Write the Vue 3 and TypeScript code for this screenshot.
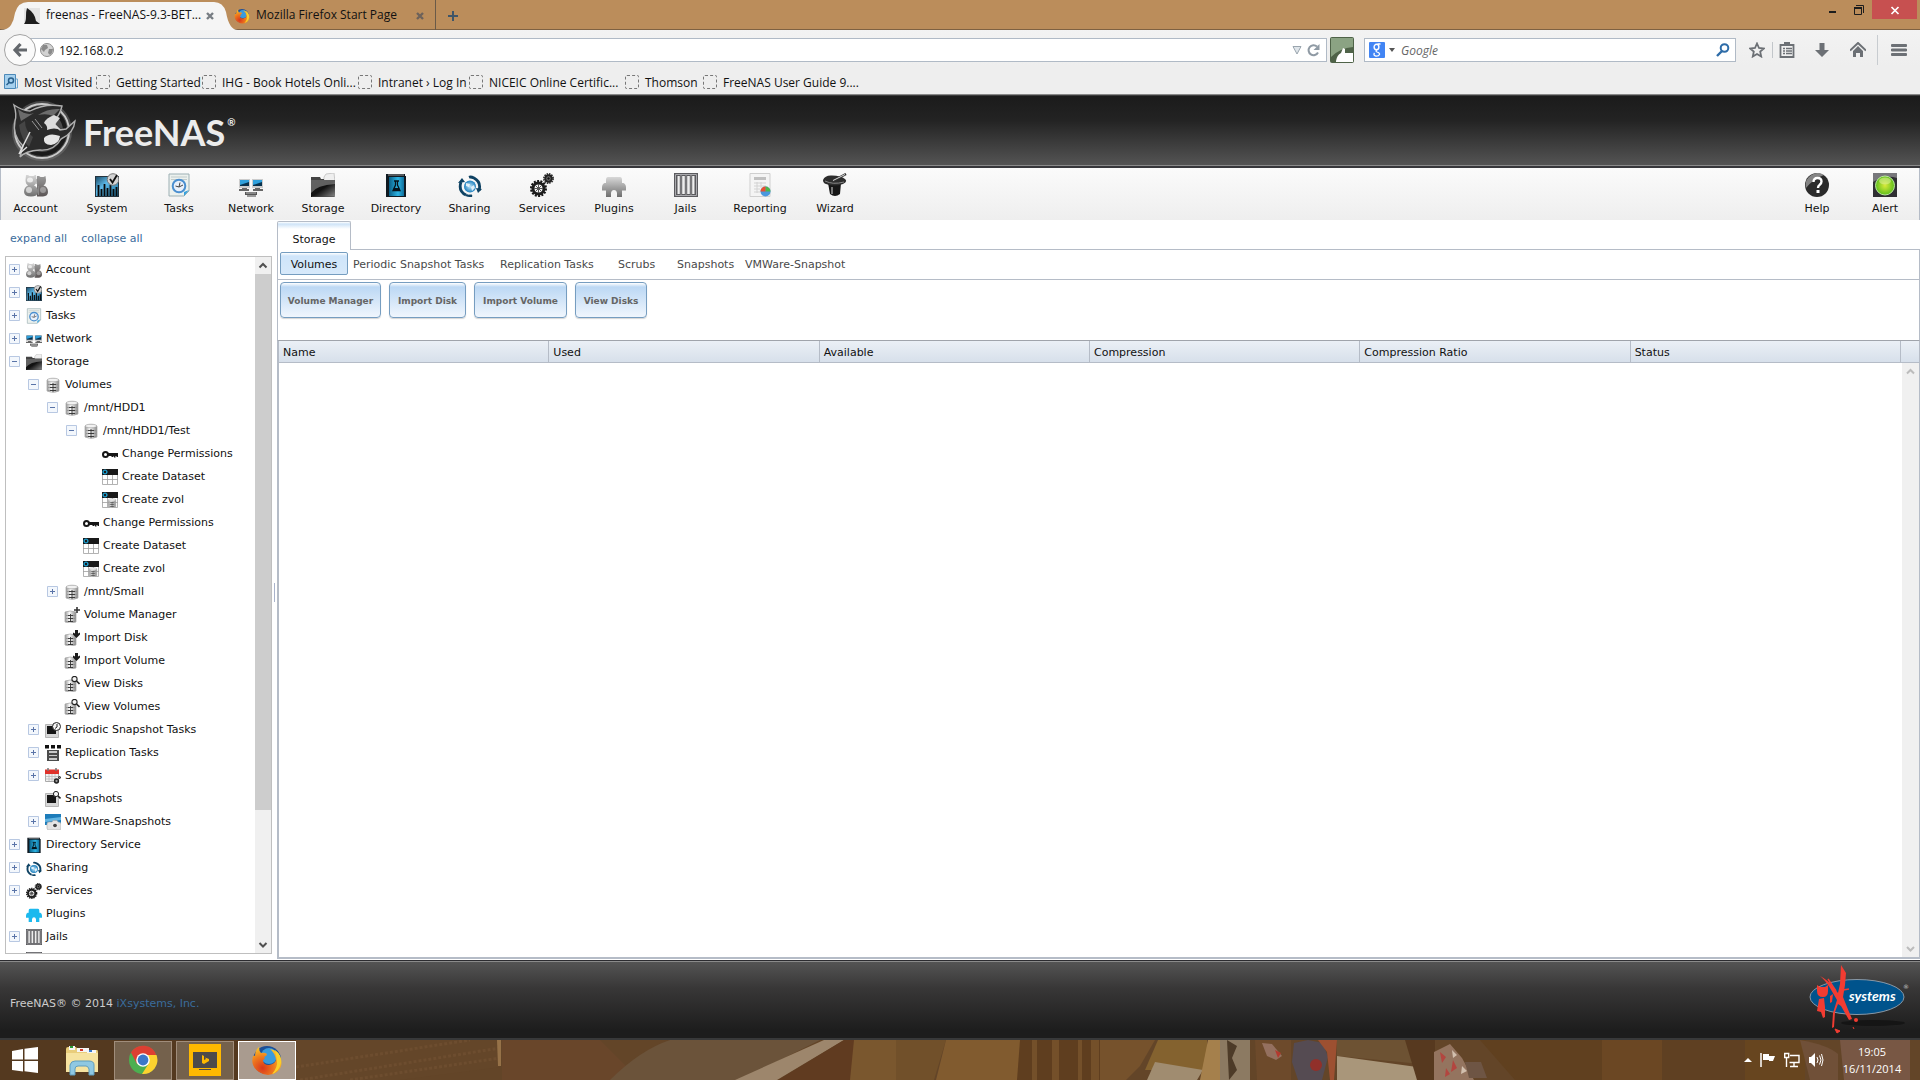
<script setup lang="ts">
interface MenuItem { label: string; icon: string }
interface TreeRow { label?: string; icon: string; level: number; state?: '+' | '-' }

const bookmarks: string[] = [
  'Most Visited', 'Getting Started', 'IHG - Book Hotels Onli...', 'Intranet › Log In',
  'NICEIC Online Certific...', 'Thomson', 'FreeNAS User Guide 9....',
]

const menu: MenuItem[] = [
  { label: 'Account', icon: 'account' },
  { label: 'System', icon: 'system' },
  { label: 'Tasks', icon: 'tasks' },
  { label: 'Network', icon: 'network' },
  { label: 'Storage', icon: 'storage' },
  { label: 'Directory', icon: 'directory' },
  { label: 'Sharing', icon: 'sharing' },
  { label: 'Services', icon: 'services' },
  { label: 'Plugins', icon: 'plugins' },
  { label: 'Jails', icon: 'jails' },
  { label: 'Reporting', icon: 'reporting' },
  { label: 'Wizard', icon: 'wizard' },
]

const statusMenu: MenuItem[] = [
  { label: 'Help', icon: 'help' },
  { label: 'Alert', icon: 'alert' },
]

const tree: TreeRow[] = [
  { label: 'Account', icon: 'account', level: 0, state: '+' },
  { label: 'System', icon: 'system', level: 0, state: '+' },
  { label: 'Tasks', icon: 'tasks', level: 0, state: '+' },
  { label: 'Network', icon: 'network', level: 0, state: '+' },
  { label: 'Storage', icon: 'storage', level: 0, state: '-' },
  { label: 'Volumes', icon: 'disk', level: 1, state: '-' },
  { label: '/mnt/HDD1', icon: 'disk', level: 2, state: '-' },
  { label: '/mnt/HDD1/Test', icon: 'disk', level: 3, state: '-' },
  { label: 'Change Permissions', icon: 'key', level: 4 },
  { label: 'Create Dataset', icon: 'dataset', level: 4 },
  { label: 'Create zvol', icon: 'zvol', level: 4 },
  { label: 'Change Permissions', icon: 'key', level: 3 },
  { label: 'Create Dataset', icon: 'dataset', level: 3 },
  { label: 'Create zvol', icon: 'zvol', level: 3 },
  { label: '/mnt/Small', icon: 'disk', level: 2, state: '+' },
  { label: 'Volume Manager', icon: 'disk-add', level: 2 },
  { label: 'Import Disk', icon: 'disk-import', level: 2 },
  { label: 'Import Volume', icon: 'disk-import', level: 2 },
  { label: 'View Disks', icon: 'disk-view', level: 2 },
  { label: 'View Volumes', icon: 'disk-view', level: 2 },
  { label: 'Periodic Snapshot Tasks', icon: 'snap-clock', level: 1, state: '+' },
  { label: 'Replication Tasks', icon: 'replication', level: 1, state: '+' },
  { label: 'Scrubs', icon: 'scrubs', level: 1, state: '+' },
  { label: 'Snapshots', icon: 'snap-view', level: 1 },
  { label: 'VMWare-Snapshots', icon: 'vmware', level: 1, state: '+' },
  { label: 'Directory Service', icon: 'directory', level: 0, state: '+' },
  { label: 'Sharing', icon: 'sharing', level: 0, state: '+' },
  { label: 'Services', icon: 'services', level: 0, state: '+' },
  { label: 'Plugins', icon: 'plugins-blue', level: 0 },
  { label: 'Jails', icon: 'jails', level: 0, state: '+' },
  { icon: 'jails', level: 0 },
]

const subTabs: string[] = [
  'Volumes', 'Periodic Snapshot Tasks', 'Replication Tasks', 'Scrubs', 'Snapshots', 'VMWare-Snapshot',
]
const actions: string[] = ['Volume Manager', 'Import Disk', 'Import Volume', 'View Disks']
const columns: string[] = ['Name', 'Used', 'Available', 'Compression', 'Compression Ratio', 'Status']
</script>

<template>
  <div class="screen">
    <svg class="sprite" aria-hidden="true">
      <defs>
        <linearGradient id="gGrey" x1="0" y1="0" x2="0" y2="1"><stop offset="0" stop-color="#d8d8d8" /><stop offset="1" stop-color="#6e6e6e" /></linearGradient>
        <linearGradient id="gDark" x1="0" y1="0" x2="0" y2="1"><stop offset="0" stop-color="#9a9a9a" /><stop offset="1" stop-color="#5b5555" /></linearGradient>
        <linearGradient id="gBlue" x1="0" y1="0" x2="1" y2="1"><stop offset="0" stop-color="#1d4d69" /><stop offset=".4" stop-color="#5db9e8" /><stop offset="1" stop-color="#1b6c97" /></linearGradient>
        <linearGradient id="gBook" x1="0" y1="0" x2="1" y2="0"><stop offset="0" stop-color="#0a5f86" /><stop offset=".6" stop-color="#2cb4e4" /><stop offset="1" stop-color="#0f6f9c" /></linearGradient>
        <linearGradient id="gFolder" x1="0" y1="0" x2="1" y2="1"><stop offset="0" stop-color="#1a1a1a" /><stop offset=".5" stop-color="#111" /><stop offset="1" stop-color="#8a8a8a" /></linearGradient>
        <linearGradient id="gDisk" x1="0" y1="0" x2="1" y2="0"><stop offset="0" stop-color="#999" /><stop offset=".4" stop-color="#fafafa" /><stop offset="1" stop-color="#8a8a8a" /></linearGradient>
        <radialGradient id="gGlobe"><stop offset="0" stop-color="#bfe6fa" /><stop offset="1" stop-color="#1c7fbd" /></radialGradient>
        <radialGradient id="gLamp"><stop offset="0" stop-color="#d8ea3a" /><stop offset="1" stop-color="#5fbf1c" /></radialGradient>
        <radialGradient id="gFox" cx=".35" cy=".75" r=".8"><stop offset="0" stop-color="#d9371c" /><stop offset=".5" stop-color="#ef7b1d" /><stop offset="1" stop-color="#fbd32a" /></radialGradient>
      </defs>

      <symbol id="i-account" viewBox="0 0 24 24">
        <path d="M13 3h2l1.500 1h3l2-1 .5 4q0 4-2.500 5.500Q24 13.500 24 19q0 4-5 4.500h-6z" fill="url(#gDark)" />
        <path d="M2 2h2l1.500 1h4L11 2h1l.5 5q0 4-2.500 5.500Q14 14 14 19q-.5 4.500-7 4.500T0 19q0-5 4-6.500Q1.500 11 1.500 7z" fill="url(#gGrey)" />
        <ellipse cx="5" cy="17" rx="3" ry="3" fill="#eee" opacity=".7" /><ellipse cx="6" cy="7" rx="3" ry="2.500" fill="#fff" opacity=".7" />
        <path d="M14.500 13v9M13 6v5" stroke="#888" fill="none" /><ellipse cx="19" cy="17" rx="3" ry="3" fill="#ccc" opacity=".5" />
      </symbol>
      <symbol id="i-system" viewBox="0 0 24 24">
        <path d="M0 3h24v21H0z" fill="#26343e" /><path d="M1 4h22v19H1z" fill="url(#gBlue)" />
        <path d="M3.500 23V12M6.500 23v-7M9.500 23V11M12.500 23v-8M15.500 23V12M18.500 23v-7M21.500 23v-9" stroke="#0a0a0a" stroke-width="1.800" />
        <circle cx="18" cy="6.500" r="5.800" fill="#d4d4d4" stroke="#777" /><path d="M15 6l2.500 3.500L22 2" fill="none" stroke="#111" stroke-width="1.800" />
      </symbol>
      <symbol id="i-tasks" viewBox="0 0 24 24">
        <path d="M2 1h20v17l-5 5H2z" fill="#ecf1ee" stroke="#9db0b4" /><path d="M4 4h16M4 6.500h16" stroke="#c1cbcb" />
        <circle cx="12" cy="13" r="6.300" fill="#e9f0fb" stroke="#4b8fd0" stroke-width="2" /><path d="M12 14l1-4.500M12 14l-3.500-1M12 14l4-2" stroke="#444" fill="none" />
        <path d="M22 17l-5 6v-4z" fill="#35a0dc" />
      </symbol>
      <symbol id="i-network" viewBox="0 0 24 24">
        <path d="M0 6h11v9H0zM13 6h11v9H13z" fill="#ccc" /><path d="M1 7h9v6H1zM14 7h9v6h-9z" fill="#08324e" /><path d="M1 7h9v2L1 12zM14 7h9v2l-9 3z" fill="#2fa0dc" />
        <path d="M3 15h5v2H3zM16 15h5v2h-5zM0 16h10v2H0zM14 16h10v2H14z" fill="#666" /><path d="M6 19h12v3H6z" fill="#555" /><path d="M8 22h9v2H8z" fill="#999" /><path d="M7 20h10" stroke="#bbb" />
      </symbol>
      <symbol id="i-storage" viewBox="0 0 24 24">
        <path d="M13 4l2-3 8-1 1 9H13z" fill="#efefef" stroke="#c9c9c9" /><path d="M0 4h9l1 2h3v3H0z" fill="#444" />
        <path d="M0 7h24v17H0z" fill="url(#gFolder)" /><path d="M0 20Q6 12 24 11V7H0z" fill="#8a8a8a" opacity=".65" /><path d="M1 24h22" stroke="#444" />
      </symbol>
      <symbol id="i-directory" viewBox="0 0 24 24">
        <path d="M2 1h19v2H22v21H2z" fill="#101a22" /><path d="M5 4h15v19H5z" fill="url(#gBook)" /><path d="M4 2h16" stroke="#999" />
        <path d="M10 8h5M11.500 8v4L9 17.500h7L13.500 12V8" fill="none" stroke="#06141c" stroke-width="1.300" /><path d="M10 15h5l1 3H9z" fill="#06141c" />
      </symbol>
      <symbol id="i-sharing" viewBox="0 0 24 24">
        <circle cx="12" cy="13.500" r="6" fill="url(#gGlobe)" /><path d="M8 10l4 1-1 3-3-1zM13 14l3-2 1 3-3 3z" fill="#fff" opacity=".8" />
        <path d="M3 9Q0 18 8 22M11 23l3 .5M21 17.500Q23.500 9 16 5M11 4.200Q13 3.500 16 5" fill="none" stroke="#0e4263" stroke-width="2.800" />
        <path d="M0 10l4-5 3 4zM24 16l-4 4-2-5z" fill="#0e4263" /><path d="M8 22q3 1.500 6 .5" fill="none" stroke="#0e4263" stroke-width="2" />
      </symbol>
      <symbol id="i-services" viewBox="0 0 24 24">
        <circle cx="8.500" cy="15.500" r="7.400" fill="none" stroke="#161616" stroke-width="2.200" stroke-dasharray="2 1.320" /><circle cx="8.500" cy="15.500" r="5.500" fill="none" stroke="#1c1c1c" stroke-width="3" />
        <circle cx="8.500" cy="15.500" r="1.800" fill="#333" /><path d="M8.500 11v9M4 15.500h9M5.500 12.500l6 6M11.500 12.500l-6 6" stroke="#555" />
        <circle cx="18.500" cy="5.500" r="4.600" fill="none" stroke="#333" stroke-width="1.800" stroke-dasharray="1.500 .9" /><circle cx="18.500" cy="5.500" r="3.200" fill="#777" stroke="#222" stroke-width="2" /><circle cx="18.500" cy="5.500" r="1.200" fill="#111" />
      </symbol>
      <symbol id="i-plugins" viewBox="0 0 24 24">
        <path d="M6 4h12q2 0 2 3v3h1.500q2.500 1 2.500 4.500v3h-4v6.500h-5v-4q-.5-3-3-3t-3 3v4H4v-6.500H0v-3Q0 11 2.500 10H4V7q0-3 2-3z" fill="url(#gGrey)" />
      </symbol>
      <symbol id="i-plugins-blue" viewBox="0 0 24 24">
        <path d="M6 4h12q2 0 2 3v3h1.500q2.500 1 2.500 4.500v3h-4v6.500h-5v-4q-.5-3-3-3t-3 3v4H4v-6.500H0v-3Q0 11 2.500 10H4V7q0-3 2-3z" fill="#1cb9ee" />
      </symbol>
      <symbol id="i-jails" viewBox="0 0 24 24">
        <path d="M0 0h24v24H0z" fill="#5a5a5e" /><path d="M3.500 3h17v18h-17z" fill="#eee" /><path d="M1.500 1.500h21v21h-21z" fill="none" stroke="#a9a9ad" />
        <path d="M7 2v20M12 2v20M17 2v20" stroke="#55555a" stroke-width="2.400" /><path d="M7 2v20M12 2v20M17 2v20" stroke="#aaa" stroke-width=".8" />
      </symbol>
      <symbol id="i-reporting" viewBox="0 0 24 24">
        <path d="M2 .5h20v23H2z" fill="#f4f4f4" stroke="#cfcfcf" /><path d="M6 4h12v3H6z" fill="#c0c0c0" />
        <path d="M6 10h12M6 13h12M6 16h6M6 19h6M9 9v11M13 9v6" stroke="#d2d2d2" /><circle cx="17.500" cy="18.500" r="5" fill="#4a97dd" />
        <path d="M17.500 18.500V13.500A5 5 0 0 1 22.500 18.500z" fill="#4cb64a" /><path d="M17.500 18.500V13.500A5 5 0 0 0 12.500 18.500z" fill="#e8502f" />
      </symbol>
      <symbol id="i-wizard" viewBox="0 0 24 24">
        <path d="M5 10h13l-1 11q-5 4-10 0z" fill="#161616" /><path d="M0 7Q2 2 9 2.500q9 0 13 3.500 3 3-2 5-9 3-17 0Q0 10 0 7z" fill="#2d2d2d" />
        <path d="M2 8q8 4 19 1" fill="none" stroke="#888" /><path d="M9 8.500L23 1" stroke="#333" stroke-width="2.400" /><path d="M10 7.500L22 1.500" stroke="#ddd" /><path d="M9 14v7" stroke="#777" stroke-width="2" />
      </symbol>
      <symbol id="i-help" viewBox="0 0 24 24">
        <circle cx="12" cy="12" r="12" fill="#2b2b2b" /><path d="M1 15A12 12 0 0 1 19 2Q8 6 1 15z" fill="#9b9b9b" opacity=".8" />
        <path d="M8.500 9q0-4 4-4t4 3.500q0 2-2 3.500-1.500 1-1.500 3" fill="none" stroke="#fff" stroke-width="2.400" /><path d="M11.500 17h3v3h-3z" fill="#fff" />
      </symbol>
      <symbol id="i-alert" viewBox="0 0 24 24">
        <path d="M0 0h24v24H0z" fill="#2f2f33" /><path d="M0 0h24v5Q12 1 0 9z" fill="#77777b" />
        <circle cx="12" cy="12.500" r="9.500" fill="url(#gLamp)" stroke="#bde8a0" /><ellipse cx="12" cy="8" rx="6" ry="3.500" fill="#e9f6a8" opacity=".5" />
      </symbol>

      <symbol id="i-disk" viewBox="0 0 16 16">
        <path d="M2 3q6-3 12 0v11q-6 3-12 0z" fill="url(#gDisk)" stroke="#a5a5a5" stroke-width=".7" /><ellipse cx="8" cy="3" rx="5.800" ry="1.800" fill="#f2f2f2" stroke="#999" stroke-width=".6" />
        <path d="M3 7.500h10M3 10.500h10M3 13.500h10" stroke="#888" stroke-width=".7" /><path d="M5 7.500h6M5 10.500h6M5 13.500h6M8 6v9" stroke="#333" stroke-width=".9" />
      </symbol>
      <symbol id="i-disk-small" viewBox="0 0 16 16">
        <path d="M1 5q5-2 11 0v10q-6 2-11 0z" fill="url(#gDisk)" stroke="#a5a5a5" stroke-width=".7" /><path d="M2 8.500h9M2 11.500h9M2 14.500h9" stroke="#888" stroke-width=".7" /><path d="M4 8.500h5M4 11.500h5M4 14.500h5M6.500 7v8" stroke="#333" stroke-width=".9" />
      </symbol>
      <symbol id="i-disk-add" viewBox="0 0 16 16"><use href="#i-disk-small" width="16" height="16" /><path d="M13 0v6M10 3h6" stroke="#333" stroke-width="1.600" /></symbol>
      <symbol id="i-disk-import" viewBox="0 0 16 16"><use href="#i-disk-small" width="16" height="16" /><path d="M11 0h3v3.500l2-1v2L12.500 8 9 4.500v-2l2 1z" fill="#1c1c1c" /></symbol>
      <symbol id="i-disk-view" viewBox="0 0 16 16"><use href="#i-disk-small" width="16" height="16" /><circle cx="10.500" cy="3" r="2.600" fill="#f5f5f5" stroke="#222" stroke-width="1.100" /><path d="M12.500 5l3 3" stroke="#222" stroke-width="1.600" /></symbol>
      <symbol id="i-key" viewBox="0 0 16 16"><circle cx="3.500" cy="8.500" r="2.500" fill="none" stroke="#161616" stroke-width="2" /><path d="M6 7h10v4h-1.500v-1h-1v1.500H12v-1h-1v.5H9.500V10H6z" fill="#161616" /></symbol>
      <symbol id="i-dataset" viewBox="0 0 16 16">
        <path d="M.5 5h15v10.500H.5zM5.500 5v10M10.500 5v10M0 10.500h16" fill="#fff" stroke="#a0a0a0" stroke-width=".8" /><path d="M0 0h16v6H0z" fill="#191919" />
        <circle cx="3" cy="3" r="1.900" fill="none" stroke="#1b9ccc" stroke-width="1.400" />
      </symbol>
      <symbol id="i-zvol" viewBox="0 0 16 16"><use href="#i-dataset" width="16" height="16" /><use href="#i-disk" x="5" y="6" width="10" height="10" /></symbol>
      <symbol id="i-snap" viewBox="0 0 16 16"><path d="M.5 2.500h13v13H.5z" fill="#d7d7d7" stroke="#b5b5b5" /><path d="M2 4h9v8H2z" fill="#161616" /></symbol>
      <symbol id="i-snap-clock" viewBox="0 0 16 16"><use href="#i-snap" width="16" height="16" /><circle cx="11.500" cy="4.500" r="4" fill="#f6f6f6" stroke="#222" /><path d="M12 2v3l-2 1.500" fill="none" stroke="#222" /></symbol>
      <symbol id="i-snap-view" viewBox="0 0 16 16"><use href="#i-snap" width="16" height="16" /><circle cx="11" cy="3" r="2.600" fill="#f6f6f6" stroke="#222" /><path d="M13 5l2.500 2.500" stroke="#222" stroke-width="1.600" /></symbol>
      <symbol id="i-replication" viewBox="0 0 16 16"><path d="M0 0h4v3.500H0zM6 0h4v3.500H6zM12 0h4v3.500h-4z" fill="#111" /><path d="M2 5h12v11H2z" fill="#4b4b4b" /><path d="M4 6h8v9H4z" fill="#c9c9c9" /><path d="M4 9h8M4 12h8" stroke="#222" stroke-width="1.300" /></symbol>
      <symbol id="i-scrubs" viewBox="0 0 16 16">
        <path d="M.5 4.500h13v9H.5z" fill="#f2f2f2" stroke="#aaa" /><path d="M0 1.500h14v4.500H0z" fill="#e0322a" /><path d="M3 0v3M11 0v3" stroke="#777" stroke-width="1.500" />
        <path d="M1 8.500h12M1 11h9M4 6v7M7 6v7M10 6v5" stroke="#bbb" stroke-width=".8" /><circle cx="11.500" cy="13" r="1.900" fill="#999" stroke="#222" stroke-width="1.500" /><circle cx="14.500" cy="9.500" r="1" stroke="#222" fill="#888" />
      </symbol>
      <symbol id="i-vmware" viewBox="0 0 16 16"><path d="M0 0h16v11H0z" fill="#1d7cba" /><path d="M0 5l16-2v3L0 8z" fill="#63b5e2" /><path d="M2 10q0-2 2-2h3l1-1.500h4L13 8q3 0 3 2v4q0 2-2 2H4q-2 0-2-2z" fill="#e3e3e3" stroke="#aaa" stroke-width=".6" /><circle cx="10" cy="11.500" r="2.400" fill="#444" stroke="#fff" /></symbol>

      <symbol id="i-fox" viewBox="0 0 32 32">
        <circle cx="16" cy="16" r="14" fill="#1d4f97" /><circle cx="18" cy="12" r="8" fill="#3a9bdc" />
        <path d="M8 3q0 4 2 6 4-1 6 1 0 2-3 3 2 2-1 3 0 5 6 5 6-1 7-5-1-7-6-11 8 1 11 10 2 8-4 13Q17 34 8 28-1 22 2 12q1-1 2 0 0-6 4-9z" fill="url(#gFox)" />
        <path d="M24 6q7 5 6 13-2 9-9 11 6-7 5-13-1-7-2-11z" fill="#fbcf2a" />
      </symbol>
    </svg>

    <header class="browser">
      <div class="titlebar">
        <button class="tab tab-active">
          <svg class="tab-shape" viewBox="0 0 238 30" width="238" height="30"><path d="M0 30Q8 30 11 25Q14 20 15 13Q18 2 28 2H214Q223 2 226 12Q229 30 238 30z" fill="#f5f5f5" /></svg>
          <svg class="tab-icon" viewBox="0 0 16 16"><path d="M0 0h16v16H0z" fill="#e4e4e4" /><path d="M0 16q2-2 2-8 0-5 1-8 8 5 9 13l4 3z" fill="#1e1e1e" /></svg>
          <span>freenas - FreeNAS-9.3-BET...</span>
          <svg class="tab-close" viewBox="0 0 10 10"><path d="M2 2l6 6M8 2l-6 6" stroke="#777d83" stroke-width="2.400" /></svg>
        </button>
        <button class="tab tab-idle">
          <svg class="tab-icon" viewBox="0 0 32 32"><use href="#i-fox" /></svg>
          <span>Mozilla Firefox Start Page</span>
          <svg class="tab-close" viewBox="0 0 10 10"><path d="M2 2l6 6M8 2l-6 6" stroke="#6d625a" stroke-width="2.400" /></svg>
        </button>
        <button class="new-tab" aria-label="New tab"><svg width="12" height="12" viewBox="0 0 12 12"><path d="M6 1v10M1 6h10" stroke="#3f5568" stroke-width="2" /></svg></button>
        <div class="window-controls">
          <button aria-label="Minimise"><svg width="10" height="10" viewBox="0 0 10 10"><path d="M1 6h7v2H1z" fill="#1d1d1d" /></svg></button>
          <button aria-label="Restore"><svg width="10" height="10" viewBox="0 0 10 10"><path d="M.5 2.500h7v7h-7zM2 .5h7.500V8" fill="none" stroke="#1d1d1d" /><path d="M0 2h8v2H0z" fill="#1d1d1d" /></svg></button>
          <button class="window-close" aria-label="Close"><svg width="10" height="10" viewBox="0 0 10 10"><path d="M1.500 2l7 7M8.500 2l-7 7" stroke="#fff" stroke-width="1.700" /></svg></button>
        </div>
      </div>

      <div class="navbar">
        <button class="back" aria-label="Back"><svg width="16" height="16" viewBox="0 0 16 16"><path d="M8.500 2L3 8l5.500 6M3 8h12" fill="none" stroke="#63676c" stroke-width="3.200" /></svg></button>
        <div class="urlbox">
          <svg width="14" height="14" viewBox="0 0 14 14"><circle cx="7" cy="7" r="6.500" fill="#d2d2d2" stroke="#8f8f8f" /><path d="M3 2l4 0 1 3-3 2-1 2-3-3zM9 6l4 0-1 4-2 2-2-2z" fill="#8a8a8a" /></svg>
          <input type="text" value="192.168.0.2" aria-label="Address" />
          <svg width="10" height="10" viewBox="0 0 10 10"><path d="M1 1.500h8L5 9z" fill="#dfe5ea" stroke="#9aa5ae" /></svg>
          <svg width="14" height="14" viewBox="0 0 14 14"><path d="M11 9.500A5 5 0 1 1 10 3.500" fill="none" stroke="#8f9aa4" stroke-width="2" /><path d="M12.500 1v6h-6z" fill="#8f9aa4" /></svg>
        </div>
        <button class="addon" aria-label="Add-on"><svg width="24" height="26" viewBox="0 0 24 26"><rect width="24" height="26" rx="2" fill="#4f6348" /><path d="M1 1h22v9Q10 11 1 20z" fill="#8ba383" /><path d="M6 24q1-6 5-8l2-5 2 1v4h8v9H6z" fill="#fff" /></svg></button>
        <div class="searchbox">
          <svg width="16" height="16" viewBox="0 0 16 16"><rect width="16" height="16" rx="1" fill="#4285f4" /><ellipse cx="7.500" cy="5" rx="2.400" ry="2.700" fill="none" stroke="#fff" stroke-width="1.400" /><path d="M8.500 2h3M8 8q-2 1 0 2 3 1 2.500 2.500-1 2-4 1.500-2.500-1-1-3" fill="none" stroke="#fff" stroke-width="1.300" /></svg>
          <svg width="6" height="4" viewBox="0 0 6 4"><path d="M0 0h6L3 4z" fill="#555" /></svg>
          <input type="text" placeholder="Google" aria-label="Search" />
          <svg width="14" height="14" viewBox="0 0 14 14"><circle cx="8.500" cy="5" r="3.800" fill="none" stroke="#2e6ca8" stroke-width="2" /><path d="M6 8l-5 5" stroke="#2e6ca8" stroke-width="2.400" /></svg>
        </div>
        <div class="nav-icons">
          <button aria-label="Bookmark"><svg width="16" height="16" viewBox="0 0 16 16"><path d="M8 1.500l2 4.500 4.800.5-3.600 3.200 1 4.800L8 12l-4.200 2.500 1-4.800L1.200 6.500 6 6z" fill="none" stroke="#6c7075" stroke-width="1.800" /></svg></button>
          <button aria-label="Library"><svg width="16" height="16" viewBox="0 0 16 16"><path d="M1.500 3h13v12h-13z" fill="none" stroke="#6c7075" stroke-width="1.800" /><path d="M5 0h6v4H5z" fill="#6c7075" /><path d="M4 6.500h2M7 6.500h6M4 9h2M7 9h6M4 11.500h2M7 11.500h6" stroke="#6c7075" stroke-width="1.300" /></svg></button>
          <button aria-label="Downloads"><svg width="16" height="16" viewBox="0 0 16 16"><path d="M5.500 1h5v7H15l-7 7-7-7h4.500z" fill="#6c7075" /></svg></button>
          <button aria-label="Home"><svg width="16" height="16" viewBox="0 0 16 16"><path d="M0 8.500L8 1l8 7.500" fill="none" stroke="#6c7075" stroke-width="2" /><path d="M3 9l5-5 5 5v6h-3v-4H6v4H3z" fill="#6c7075" /></svg></button>
          <button aria-label="Menu"><svg width="16" height="16" viewBox="0 0 16 16"><path d="M1 3.500h14M1 8h14M1 12.500h14" stroke="#6c7075" stroke-width="2.800" stroke-linecap="round" /></svg></button>
        </div>
      </div>

      <nav class="bookmarks">
        <a v-for="(b, i) in bookmarks" :key="b" href="#">
          <svg v-if="i === 0" width="14" height="16" viewBox="0 0 14 16"><path d="M.5 .5h11v14H.5z" fill="#a5d0ee" stroke="#4c89b8" /><path d="M12 5h1.500v9H12" fill="none" stroke="#6fa9d2" /><circle cx="7" cy="6.500" r="2.500" fill="none" stroke="#275f8c" stroke-width="1.500" /><path d="M5 8.500L2.500 11" stroke="#275f8c" stroke-width="1.500" /></svg>
          <i v-else class="blank"></i>
          <span>{{ b }}</span>
        </a>
      </nav>
    </header>

    <div class="brand">
      <svg class="shark" viewBox="0 0 66 60" width="66" height="60">
        <circle cx="31" cy="30" r="28" fill="none" stroke="#777" stroke-width="4" opacity=".5" />
        <circle cx="31" cy="30" r="27" fill="#4a4a4a" stroke="#c9c9c9" stroke-width="2" />
        <circle cx="31" cy="30" r="23" fill="none" stroke="#1a1a1a" stroke-width="4" />
        <path d="M3 4q9 6 16 6Q34 2 51 5q-2 8-5 11l-2 8 5 5 6-1 9-8q-1 12-14 18-7 12-21 11Q14 50 9 56l3-11Q1 34 4 20q2-6-1-16z" fill="#2b2b2b" stroke="#b0b0b0" stroke-width="1.400" />
        <path d="M7 8q8 7 16 4L10 20Q8 14 7 8zM49 8q-12-1-22 6 9-2 15 1z" fill="#6b6b6b" /><path d="M8 24q2 14 10 22l4-10Q14 30 14 20z" fill="#454545" />
        <path d="M43 14q-8 3-10 8 4 3 3 7 7-3 14 0l-6-6q3-3 5-6z" fill="#dcdcdc" /><path d="M33 37q5-6 16-2-1 8-9 9-8 0-7-7z" fill="#e6e6e6" />
        <path d="M24 18l7 9M21 20l7 9" stroke="#999" /><path d="M19 31L8 53M8 53l8-7" stroke="#ddd" stroke-width="1.500" fill="none" />
      </svg>
      <span class="wordmark">FreeNAS<sup>®</sup></span>
    </div>

    <nav class="menubar">
      <div class="menu-main">
        <button v-for="m in menu" :key="m.label"><svg width="24" height="24"><use :href="'#i-' + m.icon" /></svg><span>{{ m.label }}</span></button>
      </div>
      <div class="menu-status">
        <button v-for="m in statusMenu" :key="m.label"><svg width="24" height="24"><use :href="'#i-' + m.icon" /></svg><span>{{ m.label }}</span></button>
      </div>
    </nav>

    <main class="workspace">
      <aside class="sidebar">
        <div class="tree-links"><a href="#">expand all</a><a href="#">collapse all</a></div>
        <div class="tree-box">
          <ul class="tree">
            <li v-for="(r, i) in tree" :key="i" :class="'level-' + r.level">
              <button v-if="r.state" class="toggle" :aria-label="r.state === '+' ? 'Expand' : 'Collapse'">
                <svg width="11" height="11" viewBox="0 0 11 11"><path d="M3 5.500h5" stroke="#5a74a8" /><path v-if="r.state === '+'" d="M5.500 3v5" stroke="#5a74a8" /></svg>
              </button>
              <i v-else class="toggle-gap"></i>
              <svg class="tree-icon" width="16" height="16"><use :href="'#i-' + r.icon" /></svg>
              <a v-if="r.label" href="#">{{ r.label }}</a>
            </li>
          </ul>
          <div class="scroll">
            <svg width="16" height="17" viewBox="0 0 16 17"><path d="M4.500 10.500L8 7l3.500 3.500" fill="none" stroke="#505050" stroke-width="2" /></svg>
            <div class="thumb"></div>
            <svg class="scroll-end" width="16" height="17" viewBox="0 0 16 17"><path d="M4.500 7L8 10.500 11.500 7" fill="none" stroke="#505050" stroke-width="2" /></svg>
          </div>
        </div>
        <i class="splitter"></i>
      </aside>

      <section class="content">
        <div class="tabstrip"><button class="main-tab">Storage</button><i class="tab-rule"></i></div>
        <div class="subtabs">
          <button v-for="(s, i) in subTabs" :key="s" :class="{ selected: i === 0 }">{{ s }}</button>
        </div>
        <div class="actions"><button v-for="a in actions" :key="a">{{ a }}</button></div>
        <div class="grid">
          <table>
            <thead><tr><th v-for="c in columns" :key="c" scope="col">{{ c }}</th><th class="corner"></th></tr></thead>
          </table>
          <div class="grid-body">
            <div class="scroll faint">
              <svg width="17" height="17" viewBox="0 0 17 17"><path d="M5 10.500L8.500 7l3.500 3.500" fill="none" stroke="#bcbcbc" stroke-width="2" /></svg>
              <svg class="scroll-end" width="17" height="17" viewBox="0 0 17 17"><path d="M5 7l3.500 3.500L12 7" fill="none" stroke="#bcbcbc" stroke-width="2" /></svg>
            </div>
          </div>
        </div>
      </section>
    </main>

    <footer class="footer">
      <p>FreeNAS® © 2014 <a href="#">iXsystems, Inc.</a></p>
      <svg class="ix" width="102" height="72" viewBox="0 0 102 72">
        <ellipse cx="65" cy="60" rx="32" ry="3" fill="#151515" />
        <ellipse cx="49" cy="34" rx="47" ry="17.500" fill="#00538c" stroke="#8a98a5" />
        <path d="M9 22l3 2h5l3-2v6q0 6-5 6-6 0-6-6zM11 36l5-1 1 9v10l-2 1-2-6-4-1z" fill="#f23c32" />
        <path d="M33 2l5 8-1 12-2 12 4 10 5 12-3 1-8-14-3-2-3 8-1 15-2 1 1-15 4-13-7-12q-5-8-10-12 8 4 14 12l4 5 2-9zM22 33l3-2-1 8-2 1z" fill="#f23c32" />
        <path d="M20 16l8 12M41 26l-6 1" stroke="#f23c32" stroke-width="1.500" /><circle cx="48" cy="57" r="2" fill="#f23c32" /><path d="M27 66l5 2-3 2zM45 64l1 2" fill="#f23c32" stroke="#f23c32" />
        <text x="41" y="38" class="ix-word">systems</text><text x="95" y="26" class="ix-reg">®</text>
      </svg>
    </footer>

    <div class="taskbar">
      <svg class="wallpaper" viewBox="0 0 1920 40" preserveAspectRatio="none" aria-hidden="true">
        <path d="M0 0h1920v40H0z" fill="#634528" />
        <path d="M0 0h296v40H0z" fill="#54391f" />
        <path d="M296 0H505L500 27 400 40H296z" fill="#644629" /><path d="M296 27L470 0M300 40L500 8M350 40L500 18" stroke="#6d4d2f" stroke-width="3" stroke-dasharray="3 2" />
        <path d="M497 0h4v26h-3z" fill="#967248" /><path d="M502 0H600L640 40H502z" fill="#69462a" />
        <path d="M610 40Q640 10 670 0H820L740 40z" fill="#6b533a" /><path d="M824 0h20L777 40H735z" fill="#9d866c" /><path d="M844 0h10v40h-76z" fill="#603b20" />
        <path d="M854 0h42v40h-46z" fill="#7a572e" /><path d="M896 0h50l-12 40h-38z" fill="#71502a" /><path d="M946 0h74v40h-84z" fill="#815b2f" />
        <path d="M1020 0h80v40h-83z" fill="#5f3e1f" /><path d="M1032 0h5v40h-5zM1052 0h7v40h-7zM1078 0h4v40h-4zM1091 0h8v40h-8z" fill="#74502a" />
        <path d="M1100 0h55l-15 26-14 14h-26z" fill="#76522c" /><path d="M1158 0h49v30h-62z" fill="#84622f" /><path d="M1155 22l48 8-6 10h-50z" fill="#a08c70" />
        <path d="M1208 0h12v40h-20z" fill="#a5804c" /><path d="M1220 0h30v40h-30z" fill="#8c7a62" /><path d="M1227 0l10 6-5 12 5 12-8 10z" fill="#4d3b28" /><path d="M1255 0h36v40h-34z" fill="#6d4a2b" />
        <path d="M1262 3l10 1 10 12-6 4-9-4z" fill="#94705f" /><path d="M1275 10l6 3-3 5z" fill="#b3392f" /><path d="M1294 3l14-3 15 3 5 14-6 23h-24l-6-18z" fill="#554b52" /><circle cx="1316" cy="25" r="6" fill="#91302a" /><path d="M1318 0h19l-3 40h-4l-3-28z" fill="#9d5031" />
        <path d="M1337 0h95v25l-95-9z" fill="#6d5233" /><path d="M1337 16l80 11v13h-80z" fill="#a9967a" /><path d="M1405 0h30v40h-18z" fill="#57391f" />
        <path d="M1434 12l16-8 12 14 12 22h-40z" fill="#94745f" /><path d="M1440 12l6 5-4 6zM1453 20l4 8-6 4zM1446 28l4 6-5 3z" fill="#b3453f" /><path d="M1452 10l5 5-4 3zM1462 26l5 5-6 3z" fill="#d2bfae" /><path d="M1465 22h16l6 16h-18z" fill="#6e5544" />
        <path d="M1480 0H1602L1610 40H1515z" fill="#60401f" /><path d="M1602 0h60v40h-60z" fill="#6b4723" /><path d="M1662 0h83v40h-83z" fill="#5f4022" />
        <path d="M1745 0h60v40h-60z" fill="#67451f" /><path d="M1800 0q28 5 38 14v26h-28z" fill="#705038" /><path d="M1840 0h70v40h-66z" fill="#785744" />
      </svg>
      <div class="pinned">
        <button class="start" aria-label="Start"><svg width="28" height="28" viewBox="0 0 28 28"><path d="M1 5l11-2v10.500H1zM13.500 2.800L27 1v12.500H13.500zM1 15h11v10.500L1 24zM13.500 15H27v12l-13.500-1.800z" fill="#fff" /></svg></button>
        <button class="plain" aria-label="File Explorer"><svg width="34" height="32" viewBox="0 0 34 32"><path d="M1 5q0-2 2-2h8l2 3h19q1 0 1 2v20H1z" fill="#e9cd7b" /><path d="M4 2h6v4H4zM12 4h12v4H12zM22 6h9v4h-9z" fill="#f6f6f6" /><path d="M5 2h3v2H5z" fill="#2a9b35" /><path d="M15 5h3v2h-3z" fill="#d63a2c" /><path d="M24 6h3v2h-3z" fill="#3779c9" /><path d="M1 9h32v19H1z" fill="#f6e3a0" /><path d="M5 31V21q1-4 5-4h14q5 0 5 4v10h-5v-6q-1-3-3-3h-8q-3 0-3 3v6z" fill="#8fc8e2" stroke="#5f9cbc" /></svg></button>
        <button class="running" aria-label="Chrome"><svg width="30" height="30" viewBox="0 0 30 30"><circle cx="15" cy="15" r="14" fill="#4caf50" /><path d="M3 7.500A14 14 0 0 1 28.500 11H15l-6 8z" fill="#dd3f32" /><path d="M28.500 10A14 14 0 0 1 14 29l7-11q1-5-3-8z" fill="#fcd22f" /><circle cx="15" cy="15" r="6.800" fill="#fff" /><circle cx="15" cy="15" r="5.400" fill="#3b78c9" /></svg></button>
        <button class="running" aria-label="Bing"><svg width="32" height="32" viewBox="0 0 32 32"><path d="M0 0h32v32H0z" fill="#ffb900" /><path d="M4 8h24v16H4zM10 25h12v1H10z" fill="#4d4a4b" /><path d="M13 11l2 1v4l2-1-1-1.500 4 1.500v2l-5 3-2-1z" fill="#ffb900" /></svg></button>
        <button class="running current" aria-label="Firefox"><svg width="32" height="32"><use href="#i-fox" /></svg></button>
      </div>
      <div class="tray">
        <svg width="8" height="6" viewBox="0 0 8 6"><path d="M0 5l4-4 4 4z" fill="#fff" /></svg>
        <svg width="16" height="16" viewBox="0 0 16 16"><path d="M1 1v14" stroke="#fff" stroke-width="1.500" /><path d="M3 2h6v2h6l-2 5H9V8H3z" fill="#fff" /></svg>
        <svg width="16" height="16" viewBox="0 0 16 16"><path d="M6 3.500h9v7H5.500M10 11v3M6 14.500h8M2.500 6v9" fill="none" stroke="#fff" stroke-width="1.400" /><path d="M.7 1.500h4v4h-4z" fill="none" stroke="#fff" stroke-width="1.400" /></svg>
        <svg width="16" height="16" viewBox="0 0 16 16"><path d="M1 5h2l4-4v14l-4-4H1z" fill="#fff" /><path d="M9 5q2 3 0 6M11.500 3.500q3 4.500 0 9M13.500 2q3 6 0 12" fill="none" stroke="#fff" /></svg>
        <div class="clock"><span>19:05</span><span>16/11/2014</span></div>
      </div>
    </div>
  </div>
</template>

<style>
body { margin: 0; background: #fff; }
</style>

<style scoped>
* { box-sizing: border-box; }
button { border: 0; padding: 0; margin: 0; background: none; font: inherit; color: inherit; white-space: nowrap; }
a { text-decoration: none; color: inherit; white-space: nowrap; }
svg { display: block; flex: none; }
.sprite { position: absolute; width: 0; height: 0; }
.screen { display: flex; flex-direction: column; height: 100vh; min-height: 600px; overflow: hidden; font-family: "DejaVu Sans", Verdana, sans-serif; font-size: 11px; color: #111; }

.browser { flex: none; font-family: "Open Sans", "Segoe UI", sans-serif; font-size: 12px; background: linear-gradient(#f6f6f6, #eee 70%); }
.titlebar { display: flex; height: 30px; background: #bb8d5b; border-bottom: 1px solid #7e6142; }
.tab { position: relative; display: flex; align-items: center; height: 30px; gap: 6px; line-height: 32px; }
.tab > span { position: relative; flex: 1; text-align: left; }
.tab-icon { width: 16px; height: 16px; position: relative; margin-top: 2px; }
.tab-close { width: 10px; height: 10px; position: relative; margin-top: 2px; }
.tab-active { width: 234px; padding: 0 19px 0 24px; }
.tab-active > span { min-width: 0; }
.tab-shape { position: absolute; left: 0; top: 0; }
.tab-idle { width: 202px; padding-right: 10px; border-right: 1px solid #6a5a48; }
.new-tab { display: flex; align-items: center; padding: 2px 0 0 11px; }
.window-controls { display: flex; margin-left: auto; padding-right: 3px; }
.window-controls button { display: flex; width: 26px; height: 19px; align-items: center; justify-content: center; }
.window-controls .window-close { width: 45px; background: #c75050; }
.navbar { display: flex; align-items: center; height: 40px; padding: 0 9px 0 4px; }
.back { position: relative; display: flex; flex: none; align-items: center; justify-content: center; width: 32px; height: 32px; border: 1px solid #a3a3a3; border-radius: 50%; background: #fafafa; }
.urlbox { display: flex; flex: 1; align-items: center; height: 24px; margin-left: -7px; padding: 0 5px 0 10px; gap: 5px; background: #fff; border: 1px solid #b0bac6; }
.urlbox input, .searchbox input { flex: 1; min-width: 0; padding: 0; border: 0; outline: 0; background: none; font: inherit; color: #111; }
.addon { margin: 0 10px 0 3px; }
.searchbox { display: flex; width: 372px; height: 24px; align-items: center; padding: 0 5px 0 4px; gap: 4px; background: #fff; border: 1px solid #b0bac6; }
.searchbox input { margin-left: 2px; font-style: italic; }
.searchbox input::placeholder { color: #666; opacity: 1; }
.nav-icons { display: grid; grid-template-columns: 30px 35px 36px 27px 34px; margin-left: 13px; }
.nav-icons button { display: flex; height: 30px; align-items: center; justify-content: flex-start; }
.nav-icons button:first-child { background: linear-gradient(#c2c6ca, #c2c6ca) 23px 7px / 1px 16px no-repeat; }
.nav-icons button:last-child { border-left: 1px solid #c8ccd0; padding-left: 13px; }
.bookmarks { display: grid; grid-template-columns: 92px 106px 156px 111px 156px 78px 1fr; height: 25px; padding-left: 4px; border-bottom: 1px solid #888; }
.bookmarks a { display: flex; align-items: center; gap: 6px; height: 24px; line-height: 26px; }
.bookmarks span { padding-top: 2px; }
.blank { flex: none; width: 14px; height: 14px; border: 1px dashed #777; border-radius: 2px; }

.brand { display: flex; flex: none; align-items: center; height: 73px; padding-left: 11px; background: linear-gradient(#1b1b1b, #232323 35%, #555); border-top: 1px solid #3a3a3a; border-bottom: 2px solid #37373b; box-shadow: inset 0 -1px #8a8a8a; }
.wordmark { display: flex; padding-top: 2px; margin-left: 6px; font-family: Lato, sans-serif; font-size: 36px; line-height: 70px; font-weight: bold; color: #ececec; }
.wordmark sup { font-size: 10px; line-height: 50px; vertical-align: top; margin-left: 2px; }

.menubar { display: flex; flex: none; justify-content: space-between; height: 52px; background: linear-gradient(#fbfbfb, #eee); border-left: 1px solid #b5bcc7; border-right: 1px solid #b5bcc7; }
.menu-main { display: grid; grid-template-columns: 69px 74px 70px 74px 70px 76px 71px 74px 70px 73px 76px 74px; }
.menu-status { display: grid; grid-template-columns: 68px 68px; }
.menubar button { display: flex; flex-direction: column; align-items: center; padding-top: 5px; }
.menubar span { line-height: 14px; margin-top: 5px; }

.workspace { display: flex; flex: 1; min-height: 0; }
.sidebar { position: relative; display: flex; flex: none; flex-direction: column; width: 277px; padding: 0 5px 6px; }
.tree-links { display: flex; gap: 14px; height: 36px; padding: 1px 0 0 5px; line-height: 36px; color: #3a6c9c; flex: none; }
.tree-box { display: flex; flex: 1; width: 267px; min-height: 0; border: 1px solid #bfbfbf; overflow: hidden; }
.tree { flex: 1; min-width: 0; margin: 0; padding: 0; list-style: none; }
.tree li { display: flex; align-items: center; height: 23px; padding-left: 3px; }
.tree li a { padding-top: 2px; }
.tree .level-1 { padding-left: 22px; }
.tree .level-2 { padding-left: 41px; }
.tree .level-3 { padding-left: 60px; }
.tree .level-4 { padding-left: 79px; }
.toggle { flex: none; width: 11px; height: 11px; margin-top: 1px; background: #f3f7fc; border-radius: 1px; box-shadow: inset 0 0 0 1px #b8c8e2; }
.toggle-gap { flex: none; width: 11px; }
.tree-icon { margin: 3px 4px 0 6px; }
.scroll { display: flex; flex-direction: column; width: 16px; flex: none; background: #f0f0f0; }
.thumb { height: 77%; min-height: 0; background: #cdcdcd; }
.scroll-end { margin-top: auto; }
.splitter { position: absolute; right: 2px; top: 50%; width: 1px; height: 19px; margin-top: -7px; background: #a9b3cb; }

.content { display: flex; flex: 1; min-width: 0; flex-direction: column; padding-top: 1px; margin-bottom: 1px; }
.tabstrip { display: flex; flex: none; height: 29px; }
.main-tab { width: 74px; border: 1px solid #b5bcc7; border-bottom: 0; border-radius: 2px 2px 0 0; background: linear-gradient(#fff, #cfe4f8 2px, #fff 7px); padding-top: 6px; }
.tab-rule { flex: 1; border-bottom: 1px solid #b5bcc7; }
.subtabs { display: grid; grid-template-columns: 70px 147px 118px 59px 68px 1fr; flex: none; height: 30px; padding: 2px 0 0 2px; border-left: 1px solid #b5bcc7; border-right: 1px solid #b5bcc7; border-bottom: 1px solid #b5bcc7; color: #494949; }
.subtabs button { height: 23px; padding: 2px 3px 0; text-align: left; }
.subtabs .selected { width: 68px; padding: 1px 0 0; text-align: center; color: #111; border: 1px solid #759dc0; border-radius: 2px; background: linear-gradient(#fff, #cfe5fa 3px, #d7e9fa); }
.actions { display: grid; grid-template-columns: 101px 77px 93px 72px; flex: none; align-items: start; gap: 8px; height: 60px; padding: 2px 0 0 2px; border-left: 1px solid #b5bcc7; border-right: 1px solid #b5bcc7; }
.actions button { height: 36px; padding-top: 2px; font-size: 9px; font-weight: bold; color: #656565; border: 1px solid #769dc0; border-radius: 4px; background: linear-gradient(#fff, #bcd8f4 4px, #f0f6fd); box-shadow: 0 1px 1px #d5d5d5; }
.grid { display: flex; flex: 1; min-height: 0; flex-direction: column; border: 1px solid #a9adb4; border-width: 1px 1px 2px 2px; border-color: #a0a4ab #b5bcc7 #b5bcc7; }
table { width: 100%; flex: none; table-layout: fixed; border-collapse: separate; border-spacing: 0; background: linear-gradient(#ebf0f6, #d6dfea); }
th { height: 22px; padding: 2px 0 0 4px; text-align: left; font-weight: normal; border-right: 1px solid #b5bcc7; border-bottom: 1px solid #b5bcc7; }
.corner { width: 18px; border-right: 0; }
.grid-body { display: flex; flex: 1; min-height: 0; justify-content: flex-end; }
.faint { width: 17px; }

.footer { display: flex; flex: none; justify-content: space-between; height: 80px; padding: 0 10px; background: linear-gradient(#555, #383737 35%, #1d1d1d 90%); border-top: 1px solid #2c2c30; border-bottom: 2px solid #38393a; box-shadow: inset 0 1px #8a8a8a; color: #ccc; }
.footer p { margin: 0; line-height: 86px; height: 76px; }
.footer a { color: #3a6c9c; }
.ix { margin-top: 2px; }
.ix-word { font: italic bold 14px Lato, sans-serif; fill: #fff; }
.ix-reg { font: 6px "DejaVu Sans", sans-serif; fill: #ccc; }

.taskbar { position: relative; display: flex; flex: none; justify-content: space-between; height: 40px; background: #634528; }
.wallpaper { position: absolute; inset: 0; width: 100%; height: 100%; }
.pinned { position: relative; display: flex; align-items: center; gap: 4px; }
.pinned button { display: flex; align-items: center; justify-content: center; height: 39px; }
.pinned .start { width: 50px; }
.pinned .plain { width: 56px; }
.running { width: 58px; border: 1px solid #a08d7b; background: #74614c; }
.pinned .current { border-color: #fff; background: #a99b8f; }
.tray { position: relative; display: flex; align-items: center; gap: 8px; padding-right: 18px; color: #fff; }
.clock { display: flex; flex-direction: column; align-items: center; width: 60px; margin: 0 0 0 10px; font-family: "Open Sans", sans-serif; font-size: 11px; line-height: 17px; }
</style>
